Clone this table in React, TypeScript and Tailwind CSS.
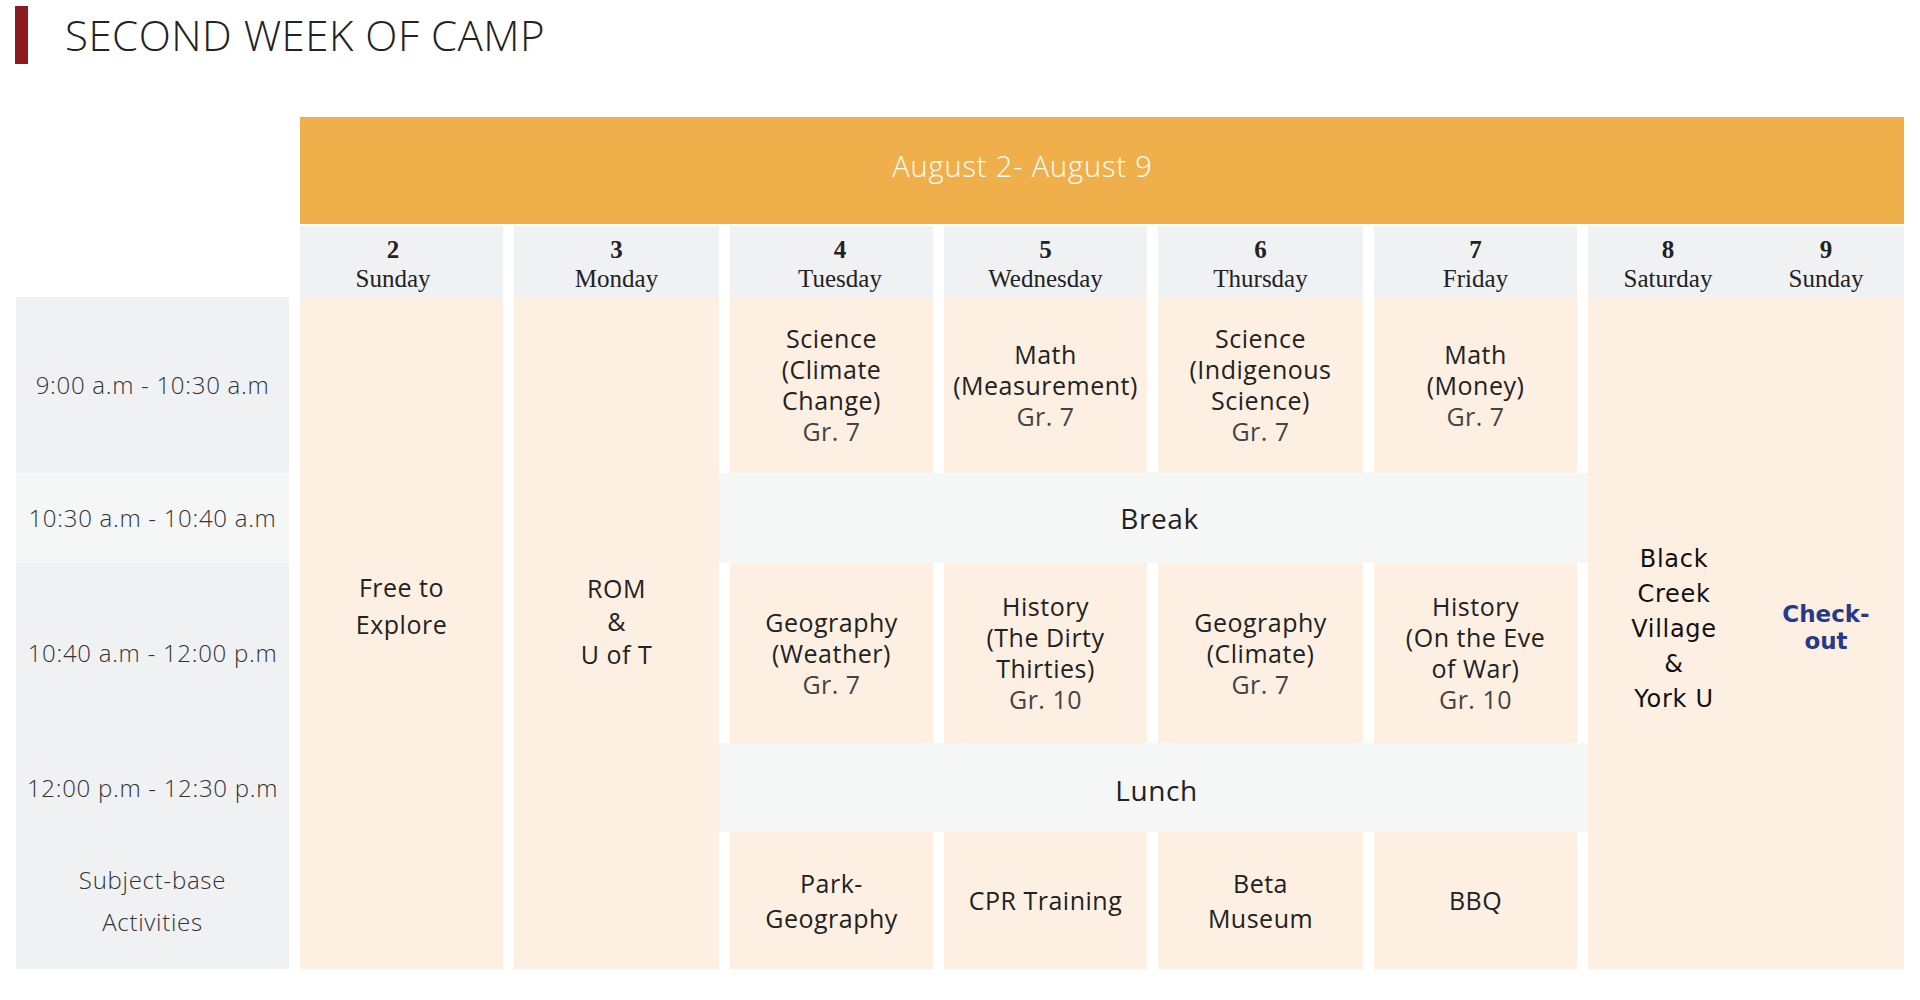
import React from "react";

const PEACH = "bg-[#fdf0e3]";

function ClassCell({ lines, grade, tall }: { lines: string[]; grade?: string; tall?: boolean }) {
  return (
    <div
      className={`${PEACH} flex flex-col items-center justify-center text-center text-[25px] tracking-[0.02em] text-[#222] ${
        tall ? "leading-[35px]" : "leading-[31px]"
      }`}
    >
      {lines.map((l, i) => (
        <div key={i} className="font-medium whitespace-nowrap">
          {l}
        </div>
      ))}
      {grade && <div className="font-normal text-[#444] whitespace-nowrap">{grade}</div>}
    </div>
  );
}

function TimeCell({ children, light }: { children: React.ReactNode; light?: boolean }) {
  return (
    <div
      className={`${light ? "bg-[#f5f7f7]" : "bg-[#f0f1f3]"} col-start-1 flex flex-col items-center justify-center text-center text-[24px] font-light tracking-[0.03em] text-[#333]`}
    >
      {children}
    </div>
  );
}

function DayHead({ n, d, shift }: { n: string; d: string; shift?: string }) {
  return (
    <div
      className={`flex flex-col items-center justify-start pt-[9px] font-['Liberation_Serif',serif] text-[25px] leading-[29px] text-[#222] ${shift ?? ""}`}
    >
      <div className="font-bold">{n}</div>
      <div>{d}</div>
    </div>
  );
}

export default function App() {
  return (
    <div className="w-[1920px] min-h-[1000px] bg-white font-['Open_Sans',sans-serif]">
      {/* Title */}
      <div className="flex items-center gap-[37px] pt-[6px] pl-[15px]">
        <div className="w-[13px] h-[58px] bg-[#8c1b1f]" />
        <h1 className="text-[42px] font-light leading-none text-[#222] tracking-[0.012em]">SECOND WEEK OF CAMP</h1>
      </div>

      {/* Schedule grid */}
      <div className="mt-[53px] ml-[16px] grid grid-cols-[273px_203px_205px_203px_203px_205px_203px_316px] grid-rows-[107px_73px_176px_90px_180px_89px_137px] gap-x-[11px]">
        {/* Orange header */}
        <div className="col-start-2 col-span-7 row-start-1 flex bg-[#efb04c]">
          <div className="flex-1 flex items-center justify-center pb-[10px] text-white text-[29px] font-light tracking-[0.03em]">
            August 2- August 9
          </div>
          <div className="w-[159px]" />
        </div>

        {/* Day headers */}
        <div className="row-start-2 col-start-2 bg-[#f0f1f3] mt-[2px] grid">
          <DayHead n="2" d="Sunday" shift="pr-[17px]" />
        </div>
        <div className="row-start-2 col-start-3 bg-[#f0f1f3] mt-[2px] grid">
          <DayHead n="3" d="Monday" />
        </div>
        <div className="row-start-2 col-start-4 bg-[#f0f1f3] mt-[2px] grid">
          <DayHead n="4" d="Tuesday" shift="pl-[17px]" />
        </div>
        <div className="row-start-2 col-start-5 bg-[#f0f1f3] mt-[2px] grid">
          <DayHead n="5" d="Wednesday" />
        </div>
        <div className="row-start-2 col-start-6 bg-[#f0f1f3] mt-[2px] grid">
          <DayHead n="6" d="Thursday" />
        </div>
        <div className="row-start-2 col-start-7 bg-[#f0f1f3] mt-[2px] grid">
          <DayHead n="7" d="Friday" />
        </div>
        <div className="row-start-2 col-start-8 bg-[#f0f1f3] mt-[2px] grid grid-cols-[160px_156px]">
          <DayHead n="8" d="Saturday" />
          <DayHead n="9" d="Sunday" />
        </div>

        {/* Time column */}
        <div className="row-start-3 col-start-1 grid">
          <TimeCell>9:00 a.m - 10:30 a.m</TimeCell>
        </div>
        <div className="row-start-4 col-start-1 grid">
          <TimeCell light>10:30 a.m - 10:40 a.m</TimeCell>
        </div>
        <div className="row-start-5 col-start-1 grid">
          <TimeCell>10:40 a.m - 12:00 p.m</TimeCell>
        </div>
        <div className="row-start-6 col-start-1 grid">
          <TimeCell>12:00 p.m - 12:30 p.m</TimeCell>
        </div>
        <div className="row-start-7 col-start-1 grid">
          <TimeCell>
            <div className="leading-[42px]">Subject-base</div>
            <div className="leading-[42px]">Activities</div>
          </TimeCell>
        </div>

        {/* Sunday & Monday full-day */}
        <div className={`row-start-3 row-span-5 col-start-2 ${PEACH} flex flex-col items-center justify-center pb-[54px] text-[25px] leading-[37px] font-medium tracking-[0.02em] text-[#222]`}>
          <div>Free to</div>
          <div>Explore</div>
        </div>
        <div className={`row-start-3 row-span-5 col-start-3 ${PEACH} flex flex-col items-center justify-center pb-[24px] text-[25px] leading-[33px] font-medium tracking-[0.02em] text-[#222]`}>
          <div>ROM</div>
          <div>&amp;</div>
          <div>U of T</div>
        </div>

        {/* Row 1 */}
        <div className="row-start-3 col-start-4 grid">
          <ClassCell lines={["Science", "(Climate", "Change)"]} grade="Gr. 7" />
        </div>
        <div className="row-start-3 col-start-5 grid">
          <ClassCell lines={["Math", "(Measurement)"]} grade="Gr. 7" />
        </div>
        <div className="row-start-3 col-start-6 grid">
          <ClassCell lines={["Science", "(Indigenous", "Science)"]} grade="Gr. 7" />
        </div>
        <div className="row-start-3 col-start-7 grid">
          <ClassCell lines={["Math", "(Money)"]} grade="Gr. 7" />
        </div>

        {/* Break */}
        <div className="row-start-4 col-start-4 col-span-4 -mx-[11px] bg-[#f5f7f7] flex items-center justify-center pl-[12px] text-[28px] tracking-[0.02em] text-[#222]">
          Break
        </div>

        {/* Row 3 */}
        <div className="row-start-5 col-start-4 grid">
          <ClassCell lines={["Geography", "(Weather)"]} grade="Gr. 7" />
        </div>
        <div className="row-start-5 col-start-5 grid">
          <ClassCell lines={["History", "(The Dirty", "Thirties)"]} grade="Gr. 10" />
        </div>
        <div className="row-start-5 col-start-6 grid">
          <ClassCell lines={["Geography", "(Climate)"]} grade="Gr. 7" />
        </div>
        <div className="row-start-5 col-start-7 grid">
          <ClassCell lines={["History", "(On the Eve", "of War)"]} grade="Gr. 10" />
        </div>

        {/* Lunch */}
        <div className="row-start-6 col-start-4 col-span-4 -mx-[11px] bg-[#f5f7f7] flex items-center justify-center pl-[6px] pt-[4px] text-[28px] tracking-[0.02em] text-[#222]">
          Lunch
        </div>

        {/* Row 5 */}
        <div className="row-start-7 col-start-4 grid">
          <ClassCell tall lines={["Park-", "Geography"]} />
        </div>
        <div className="row-start-7 col-start-5 grid">
          <ClassCell tall lines={["CPR Training"]} />
        </div>
        <div className="row-start-7 col-start-6 grid">
          <ClassCell tall lines={["Beta", "Museum"]} />
        </div>
        <div className="row-start-7 col-start-7 grid">
          <ClassCell tall lines={["BBQ"]} />
        </div>

        {/* Saturday & Sunday */}
        <div className={`row-start-3 row-span-5 col-start-8 ${PEACH} grid grid-cols-[160px_156px]`}>
          <div className="flex flex-col items-center justify-center pl-[12px] pb-[8px] font-['DejaVu_Sans',sans-serif] text-[24px] leading-[35px] tracking-[0.03em] text-[#111]">
            <div>Black</div>
            <div>Creek</div>
            <div>Village</div>
            <div>&amp;</div>
            <div>York U</div>
          </div>
          <div className="flex flex-col items-center justify-center pb-[10px] font-['DejaVu_Sans',sans-serif] font-bold text-[23px] leading-[27px] text-[#263a8c]">
            <div>Check-</div>
            <div>out</div>
          </div>
        </div>
      </div>
    </div>
  );
}
